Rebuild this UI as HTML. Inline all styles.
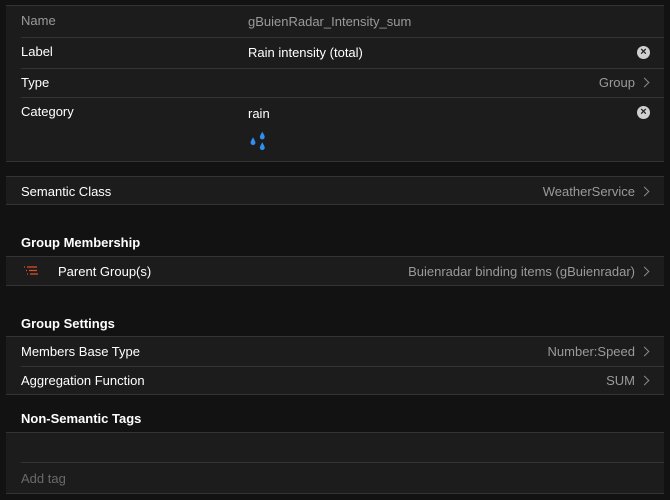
<!DOCTYPE html>
<html><head><style>
*{margin:0;padding:0;box-sizing:border-box}
body{width:670px;height:500px;background:#121212;font-family:"Liberation Sans",sans-serif;font-size:13px;color:#fff;position:relative;overflow:hidden}
.p{position:absolute;left:6px;width:658px;background:#1c1c1c;border-top:1px solid #333;border-bottom:1px solid #333}
.r{position:relative;height:29px}
.r+.r:before{content:"";position:absolute;left:15px;right:0;top:0;border-top:1px solid #333}
.l{position:absolute;left:15px;top:7px}
.v{position:absolute;left:242px;top:8px}
.rv{position:absolute;right:29px;top:7px;color:#9a9a9a}
.ch{position:absolute;right:16px;top:11px;width:7px;height:7px;border-right:1.5px solid #8a8a8a;border-top:1.5px solid #8a8a8a;transform:rotate(45deg)}
.x{position:absolute;right:14px;top:9px;width:13px;height:13px;border-radius:50%;background:#d0d0d0;color:#1c1c1c;font-size:11px;font-weight:bold;text-align:center;line-height:13px}
.h{position:absolute;left:21px;font-weight:bold;font-size:13px}
</style></head><body>
<div class="p" style="top:5px;height:157px">
 <div class="r" style="height:31px"><span class="l" style="color:#9a9a9a">Name</span><span class="v" style="color:#9a9a9a">gBuienRadar_Intensity_sum</span></div>
 <div class="r" style="height:31px"><span class="l">Label</span><span class="v">Rain intensity (total)</span><span class="x" style="top:9px">×</span></div>
 <div class="r"><span class="l">Type</span><span class="rv">Group</span><span class="ch"></span></div>
 <div class="r" style="height:64px"><span class="l">Category</span><span class="v" style="top:9px">rain</span><span class="x" style="top:9px">×</span>
  <svg style="position:absolute;left:243px;top:34px" width="18" height="20" viewBox="0 0 12 14">
   <path d="M9 0.5 C7.6 2.8 7.3 3.7 7.3 4.2 a1.7 1.7 0 0 0 3.4 0 C10.7 3.7 10.4 2.8 9 0.5Z" fill="#2e8ff0"/>
   <path d="M2.5 4.5 C1.1 6.8 0.8 7.7 0.8 8.2 a1.7 1.7 0 0 0 3.4 0 C4.2 7.7 3.9 6.8 2.5 4.5Z" fill="#2e8ff0"/>
   <path d="M9 8 C7.6 10.3 7.3 11.2 7.3 11.7 a1.7 1.7 0 0 0 3.4 0 C10.7 11.2 10.4 10.3 9 8Z" fill="#2e8ff0"/>
  </svg></div>
</div>
<div class="p" style="top:176px;height:29px"><div class="r" style="height:27px"><span class="l">Semantic Class</span><span class="rv">WeatherService</span><span class="ch"></span></div></div>
<div class="h" style="top:235px">Group Membership</div>
<div class="p" style="top:256px;height:30px"><div class="r" style="height:28px">
 <svg style="position:absolute;left:17px;top:9px" width="16" height="10" viewBox="0 0 16 10"><g stroke="#e0502a" stroke-width="1.2"><path d="M1 1h1M4 1h10M3 4.5h1M6 4.5h8M4 8h1M7 8h8"/></g></svg>
 <span class="l" style="left:52px">Parent Group(s)</span><span class="rv">Buienradar binding items (gBuienradar)</span><span class="ch"></span></div></div>
<div class="h" style="top:316px">Group Settings</div>
<div class="p" style="top:336px;height:59px">
 <div class="r"><span class="l">Members Base Type</span><span class="rv">Number:Speed</span><span class="ch"></span></div>
 <div class="r"><span class="l">Aggregation Function</span><span class="rv">SUM</span><span class="ch"></span></div>
</div>
<div class="h" style="top:411px">Non-Semantic Tags</div>
<div class="p" style="top:432px;height:62px">
 <div class="r"></div>
 <div class="r"><span class="l" style="color:#6a6a6a;top:9px">Add tag</span></div>
</div>
</body></html>
